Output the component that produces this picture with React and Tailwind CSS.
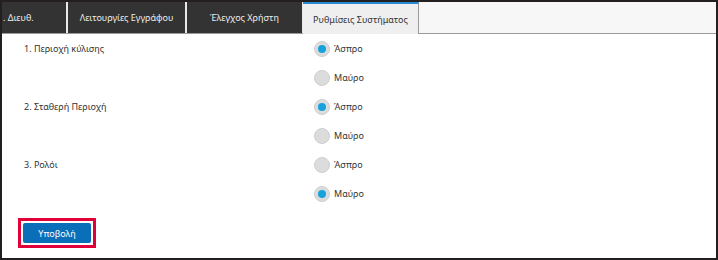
import { useState } from "react";

const groups = [
  { label: "1. Περιοχή κύλισης", name: "scroll", value: "white" },
  { label: "2. Σταθερή Περιοχή", name: "fixed", value: "white" },
  { label: "3. Ρολόι", name: "clock", value: "black" },
];

function Radio({ checked, onClick, label }) {
  return (
    <button
      type="button"
      onClick={onClick}
      className="flex h-[29px] items-center gap-[4px] text-left leading-none"
    >
      <span className="flex h-[16px] w-[16px] items-center justify-center rounded-full border border-[#cfcfcf] bg-[#dcdcdc]">
        {checked && <span className="h-[8px] w-[8px] rounded-full bg-[#17a2de]" />}
      </span>
      <span className="text-[9px] text-[#333]">{label}</span>
    </button>
  );
}

export default function App() {
  const [values, setValues] = useState(
    Object.fromEntries(groups.map((g) => [g.name, g.value]))
  );

  return (
    <div
      className="flex h-[260px] w-[718px] flex-col overflow-hidden border-2 border-[#231f20] bg-white"
      style={{ fontFamily: '"Noto Sans", "DejaVu Sans", sans-serif' }}
    >
      {/* tab bar */}
      <div className="flex h-[32px] shrink-0 border-b border-[#9a9a9a] bg-[#f7f7f7] text-[9px] leading-none">
        <div className="flex w-[64px] shrink-0 items-center overflow-hidden whitespace-nowrap bg-[#333] pl-[1px] text-[#eee]">
          . Διευθ.
        </div>
        <div className="w-[2px] shrink-0 bg-[#e8e8e8]" />
        <div className="flex w-[117px] shrink-0 items-center justify-center whitespace-nowrap bg-[#333] text-[#eee]">
          Λειτουργίες Εγγράφου
        </div>
        <div className="w-[2px] shrink-0 bg-[#e8e8e8]" />
        <div className="flex w-[115px] shrink-0 items-center justify-center whitespace-nowrap bg-[#333] text-[#eee]">
          Έλεγχος Χρήστη
        </div>
        <div className="w-[1px] shrink-0 bg-[#e8e8e8]" />
        <div className="-mb-px flex w-[116px] shrink-0 items-center justify-center overflow-hidden whitespace-nowrap border-t-2 border-r border-t-[#2a8ad4] border-r-[#9a9a9a] bg-[#efefef] text-[#333]">
          Ρυθμίσεις Συστήματος
        </div>
        <div className="flex-1" />
      </div>

      {/* settings */}
      <div className="flex flex-col">
        {groups.map((g) => (
          <div key={g.name} className="flex">
            <div className="flex h-[29px] w-[312px] items-center pl-[22px] text-[9px] leading-none text-[#333]">
              {g.label}
            </div>
            <div className="flex flex-col">
              <Radio
                label="Άσπρο"
                checked={values[g.name] === "white"}
                onClick={() => setValues({ ...values, [g.name]: "white" })}
              />
              <Radio
                label="Μαύρο"
                checked={values[g.name] === "black"}
                onClick={() => setValues({ ...values, [g.name]: "black" })}
              />
            </div>
          </div>
        ))}
      </div>

      <div className="ml-[16px] mt-[10px] w-fit border-[3px] border-[#e2003b] bg-white p-[2px]">
        <button
          type="button"
          className="flex h-[20px] w-[68px] items-center justify-center rounded-[2px] bg-[#0b6eb8] text-[9px] leading-none text-white"
        >
          Υποβολή
        </button>
      </div>
    </div>
  );
}
